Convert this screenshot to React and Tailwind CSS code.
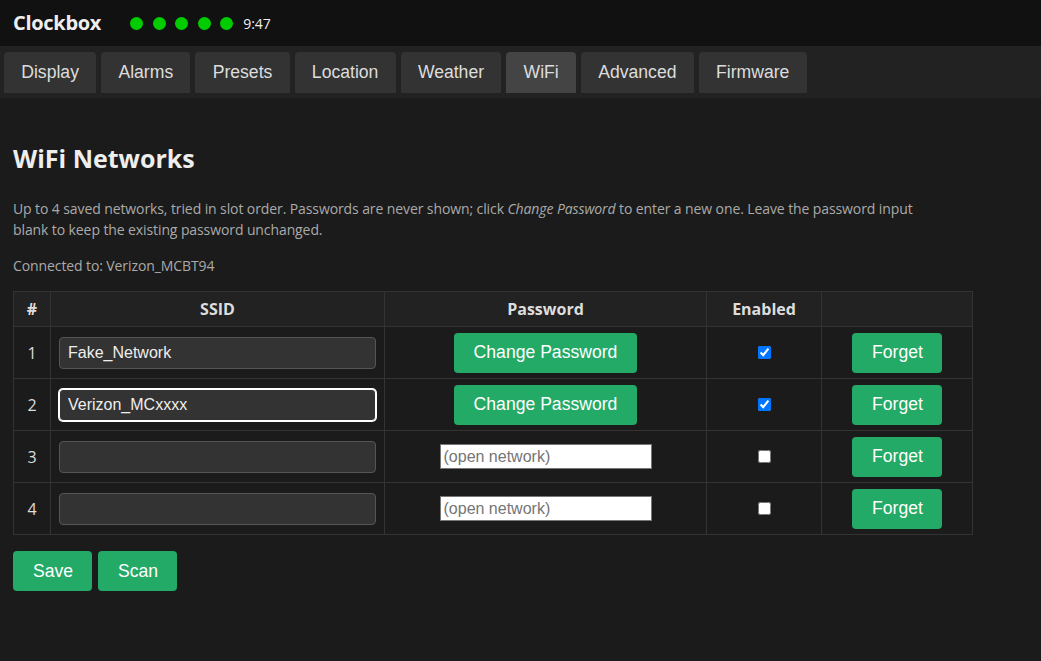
const tabs = ["Display", "Alarms", "Presets", "Location", "Weather", "WiFi", "Advanced", "Firmware"]

const rows = [
    { slot: 1, ssid: "Fake_Network", saved: true, enabled: true },
    { slot: 2, ssid: "Verizon_MCxxxx", saved: true, enabled: true, focused: true },
    { slot: 3, ssid: "", saved: false, enabled: false },
    { slot: 4, ssid: "", saved: false, enabled: false },
]

function GreenButton({ children, className = "" }) {
    return (
        <button className={`h-[40px] px-[20px] whitespace-nowrap bg-[#22aa66] rounded-[4px] text-white text-[17.6px] font-['Liberation_Sans',Arial,sans-serif] ${className}`}>
            {children}
        </button>
    )
}

export default function App() {
    return (
        <div className="min-h-[661px] bg-[#1b1b1b] text-[#dddddd] font-['Open_Sans',sans-serif]">
            <div className="h-[46px] bg-[#111111] px-[13px] flex items-center">
                <p className="text-[20px] font-bold text-[#eeeeee] tracking-[-0.3px]">Clockbox</p>
                <div className="flex items-center gap-[9.5px] ml-[29px]">
                    {[0, 1, 2, 3, 4].map((i) => (
                        <span key={i} className="w-[13px] h-[13px] rounded-full bg-[#00cc00]" />
                    ))}
                </div>
                <span className="ml-[10px] text-[14px] text-[#eeeeee]">9:47</span>
            </div>

            <div className="bg-[#222222] pt-[6px] pb-[5px] pl-[4px] flex gap-[5px]">
                {tabs.map((t) => (
                    <button
                        key={t}
                        className={`h-[41px] px-[17.25px] rounded-t-[4px] text-[17.6px] text-[#dddddd] font-['Liberation_Sans',Arial,sans-serif] ${t === "WiFi" ? "bg-[#444444]" : "bg-[#333333]"}`}
                    >
                        {t}
                    </button>
                ))}
            </div>

            <div className="px-[13px] pt-[44px]">
                <h2 className="text-[25px] leading-[32px] font-bold text-[#eeeeee]">WiFi Networks</h2>

                <p className="mt-[24px] text-[14px] leading-[21px] text-[#aaaaaa] tracking-[-0.1px] max-w-[930px]">
                    Up to 4 saved networks, tried in slot order. Passwords are never shown; click <em>Change Password</em> to enter a new one. Leave the password input blank to keep the existing password unchanged.
                </p>

                <p className="mt-[15px] text-[14px] leading-[21px] text-[#aaaaaa] tracking-[-0.1px]">Connected to: Verizon_MCBT94</p>

                <table className="mt-[15px] border-collapse text-[16px]">
                    <thead>
                        <tr className="bg-[#222222] h-[35px]">
                            <th className="w-[37px] border border-[#333333] font-bold">#</th>
                            <th className="w-[334px] border border-[#333333] font-bold">SSID</th>
                            <th className="w-[322px] border border-[#333333] font-bold">Password</th>
                            <th className="w-[115px] border border-[#333333] font-bold">Enabled</th>
                            <th className="w-[151px] border border-[#333333]"></th>
                        </tr>
                    </thead>
                    <tbody>
                        {rows.map((r) => (
                            <tr key={r.slot} className="h-[52px]">
                                <td className="border border-[#333333] text-center">{r.slot}</td>
                                <td className="border border-[#333333] px-[8px]">
                                    <input
                                        type="text"
                                        defaultValue={r.ssid}
                                        className={`w-full h-[32px] px-[8px] bg-[#333333] rounded-[4px] text-[16px] text-[#eeeeee] font-['Liberation_Sans',Arial,sans-serif] outline-none ${r.focused ? "border border-white ring-1 ring-white" : "border border-[#555555]"}`}
                                    />
                                </td>
                                <td className="border border-[#333333] text-center">
                                    {r.saved ? (
                                        <GreenButton>Change Password</GreenButton>
                                    ) : (
                                        <input
                                            type="password"
                                            placeholder="(open network)"
                                            className="w-[212px] h-[25px] px-[3px] bg-white border border-[#767676] text-[16px] text-black placeholder:text-[#757575] font-['Liberation_Sans',Arial,sans-serif] outline-none"
                                        />
                                    )}
                                </td>
                                <td className="border border-[#333333]">
                                    <div className="flex justify-center items-center">
                                        <input type="checkbox" defaultChecked={r.enabled} className="w-[13px] h-[13px] m-0" />
                                    </div>
                                </td>
                                <td className="border border-[#333333] text-center">
                                    <GreenButton className="w-[90px]">Forget</GreenButton>
                                </td>
                            </tr>
                        ))}
                    </tbody>
                </table>

                <div className="flex gap-[6px] mt-[16px]">
                    <GreenButton className="w-[79px]">Save</GreenButton>
                    <GreenButton className="w-[79px]">Scan</GreenButton>
                </div>
            </div>
        </div>
    )
}
